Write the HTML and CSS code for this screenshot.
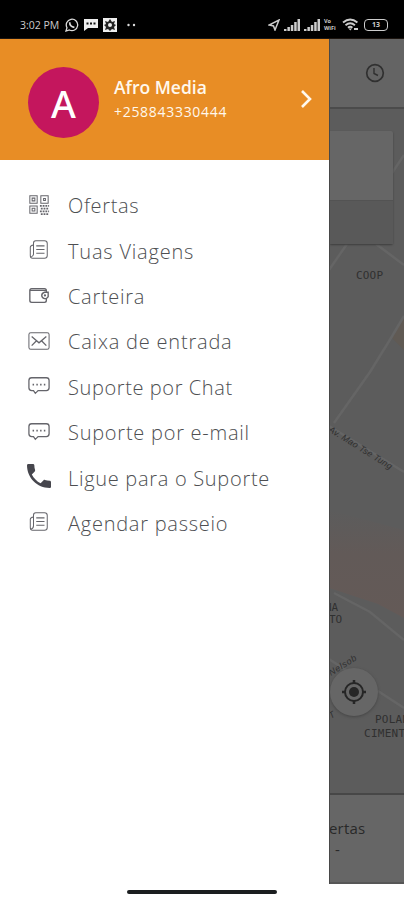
FILE: index.html
```html
<!DOCTYPE html>
<html lang="pt">
<head>
<meta charset="utf-8">
<title>Menu</title>
<link rel="stylesheet" href="styles.css">
</head>
<body>
<svg class="defs" width="0" height="0" aria-hidden="true">
  <symbol id="doc" viewBox="0 0 24 24"><path d="M6 6V4.500Q6 2 8.500 2H18q3 0 3 3v13q0 3-3 3H5q-2.500 0-2.500-3V9q0-2 3.500-2.500V16q0 3-2.500 3.500M9 7.500h9M9 11.500h9M9 15.500h9"/></symbol>
  <symbol id="chat" viewBox="0 0 24 24"><path stroke-width="1.400" d="M4 3h16q3 0 3 3v8q0 3-3 3h-9l-3 3-2-3H4q-3 0-3-3V6q0-3 3-3Z"/><path stroke-width="1.700" stroke-dasharray="1.600 2.500" d="M5 10.500h15"/></symbol>
</svg>
<div class="phone">
  <header class="status">
    <div class="status-left">
      <span class="time">3:02 PM</span>
      <svg width="14" height="14" viewBox="0 0 14 14" fill="none" stroke="#ddd"><path stroke-width="1.300" d="M1 13l1-3.300a5.700 5.700 0 1 1 2.400 2.300Z"/><path stroke-width="1.700" d="M4.700 4.300q0 4.500 4.700 5"/></svg>
      <svg width="14" height="13" viewBox="0 0 14 13"><path fill="#eee" d="M0 1h14v9H4l-4 3Z"/><path stroke="#111" stroke-width="2" stroke-dasharray="2 1.500" d="M2.500 5.500h10"/></svg>
      <svg width="14" height="14" viewBox="0 0 14 14"><path fill="#eee" d="M0 0h14v14H0Z"/><path fill="#222" d="M7 1l2 3 3-1-1 3 2 1-2 2 1 3-3-1-2 2-2-2-3 1 1-3-2-2 2-1-1-3 3 1Z"/><circle cx="7" cy="7" r="2" fill="#eee"/></svg>
      <svg class="more" width="9" height="4" viewBox="0 0 9 4" fill="#ddd"><circle cx="1.500" cy="2" r="1.200"/><circle cx="7" cy="2" r="1.200"/></svg>
    </div>
    <div class="status-right">
      <svg width="12" height="12" viewBox="0 0 12 12" fill="none" stroke="#ccc" stroke-width="1.500"><path d="M11 1L7 11 5.500 7 1 6Z"/></svg>
      <svg width="16" height="12" viewBox="0 0 16 12" fill="#ccc"><path d="M0 10h2.500v2H0ZM3.400 8h2.500v4h-2.500ZM6.800 6h2.500v6h-2.500ZM10.200 3h2.500v9h-2.500ZM13.500 0h2.500v12h-2.500Z"/></svg>
      <svg width="16" height="12" viewBox="0 0 16 12" fill="#ccc"><path d="M0 10h2.500v2H0ZM3.400 8h2.500v4h-2.500ZM6.800 6h2.500v6h-2.500ZM10.200 3h2.500v9h-2.500ZM13.500 0h2.500v12h-2.500Z"/></svg>
      <span class="vo"><span>Vo</span><span>WiFi</span></span>
      <svg width="17" height="13" viewBox="0 0 17 13" fill="none" stroke="#ccc" stroke-width="1.900"><path d="M1 4.500q7.200-6 14.400 0M3.500 7.300q4.700-4 9.400 0M6 9.700q2.200-2 4.400 0"/><path fill="#ccc" stroke="none" d="M6.500 10.500h3.500l-1.700 2ZM12 10h4v2h-4Z"/></svg>
      <span class="battery">13</span>
    </div>
  </header>
  <div class="content">
    <aside class="drawer">
      <div class="profile">
        <div class="avatar">A</div>
        <div class="who"><div class="name">Afro Media</div><div class="number">+258843330444</div></div>
        <svg class="chevron" width="12" height="20" viewBox="0 0 12 20"><path d="M2 2l8 8-8 8" fill="none" stroke="#fff8ed" stroke-width="2.600"/></svg>
      </div>
      <nav class="menu">
        <a class="item"><svg class="icon" viewBox="0 0 24 24"><path d="M2 2h8v8H2ZM14 2h8v8h-8ZM2 13h8v8H2ZM4.500 4.500h3v3h-3ZM17 5h2v2h-2ZM4.500 15.500h3v3h-3Z"/><path stroke-width="2" stroke-dasharray="2 1" d="M13 13h10M14 16h9M13 19h10M14 22h9"/></svg><span class="w1">Ofertas</span></a>
        <a class="item"><svg class="icon"><use href="#doc"/></svg><span class="w2">Tuas Viagens</span></a>
        <a class="item"><svg class="icon" viewBox="0 0 24 24"><path stroke-width="1.500" d="M20 9V7q0-2-2-2H4Q2 5 2 7v11q0 2 2 2h14q2 0 2-2v-2M2 7h18M22 9h-4q-3 1-3 3.500t3 3.500h2l2-2Z"/><circle cx="18.500" cy="12.500" r=".7"/></svg><span class="w3">Carteira</span></a>
        <a class="item"><svg class="icon" viewBox="0 0 24 24"><rect x="1" y="3" width="22" height="18" rx="2"/><path stroke-width="1.400" d="M4 7l8 7 8-7M4 17l5-5M20 17l-5-5"/></svg><span class="w4">Caixa de entrada</span></a>
        <a class="item"><svg class="icon"><use href="#chat"/></svg><span class="w5">Suporte por Chat</span></a>
        <a class="item"><svg class="icon"><use href="#chat"/></svg><span class="w6">Suporte por e-mail</span></a>
        <a class="item"><svg class="icon call" viewBox="3 3 18 18"><path d="M6.620 10.790c1.440 2.830 3.760 5.140 6.590 6.590l2.200-2.200c.27-.27.67-.36 1.020-.24 1.120.37 2.330.57 3.570.57.55 0 1 .45 1 1V20c0 .55-.45 1-1 1C10.610 21 3 13.390 3 4c0-.55.45-1 1-1h3.500c.55 0 1 .45 1 1 0 1.250.2 2.450.57 3.570.11.35.03.74-.25 1.020Z"/></svg><span class="w7">Ligue para o Suporte</span></a>
        <a class="item"><svg class="icon"><use href="#doc"/></svg><span class="w8">Agendar passeio</span></a>
      </nav>
    </aside>
    <main class="behind">
      <div class="topbar"><svg width="20" height="20" viewBox="0 0 20 20" fill="none" stroke="#303030" stroke-width="1.700"><circle cx="10" cy="10" r="8.300"/><path stroke-width="1.400" d="M9 5v5.500l4 2"/></svg></div>
      <div class="map">
        <svg width="75" height="684" viewBox="329 109 75 684">
          <defs><linearGradient id="warm" x1="0" y1="0" x2="0" y2="1"><stop offset="0" stop-color="#5c5c5c"/><stop offset=".4" stop-color="#625a58"/><stop offset="1" stop-color="#645a57"/></linearGradient></defs>
          <path fill="#5c5c5c" d="M329 109h75v684h-75Z"/>
          <path fill="url(#warm)" d="M329 510L404 530V618L378 604 329 588Z"/>
          <path fill="#62594f" fill-opacity=".6" d="M404 316L392 338 404 350Z"/>
          <g fill="none" stroke="#656565" stroke-width="2.500"><path d="M329 270L347 244M376 244L404 265M392 173L404 155M404 316L391 338 370 372 334 423M329 426L404 472M334 593L370 612 404 640M329 659L404 708"/></g>
          <g class="labels">
            <text x="356" y="279" textLength="27">COOP</text>
            <text x="325" y="611" textLength="13">NA</text><text x="329" y="623" textLength="13">TO</text>
            <text x="375" y="723" textLength="34">POLAN</text><text x="364" y="737" textLength="48">CIMENTO</text>
            <text class="street" transform="translate(328 431) rotate(32)" textLength="73">Av. Mao Tse Tung</text>
            <text class="street" transform="translate(331 676) rotate(-32)" textLength="31">Nelsob</text>
            <text class="street" transform="translate(331 719) rotate(-32)">T</text>
          </g>
        </svg>
        <div class="promo"><div></div></div>
        <div class="locate"><svg width="26" height="26" viewBox="0 0 26 26" fill="none" stroke="#262626"><circle cx="13" cy="13" r="9" stroke-width="2"/><circle cx="13" cy="13" r="5" fill="#262626" stroke="none"/><path stroke-width="2.500" d="M13 1v4M13 21v4M1 13h4M21 13h4"/></svg></div>
      </div>
      <div class="bottom"><span class="tab">ertas</span><span class="dash">-</span></div>
    </main>
  </div>
  <footer class="gesture"><div class="pill"></div></footer>
</div>
</body>
</html>
```
FILE: styles.css
```css
* { box-sizing: border-box; }
body { margin: 0; background: #fff; font-family: "Open Sans", "Noto Sans", sans-serif; }
.defs { display: block; }
.phone { width: 404px; height: 900px; display: flex; flex-direction: column; overflow: hidden; }
.status { height: 39px; background: #000; border-bottom: 1px solid #1c1510; display: flex; justify-content: space-between; align-items: flex-start; padding: 17px 16px 0 20px; color: #ccc; }
.status-left, .status-right { display: flex; align-items: center; height: 15px; }
.status-left { gap: 5px; }
.time { font-size: 10.5px; line-height: 14px; width: 40px; white-space: nowrap; }
.more { margin-left: 5px; }
.status-right { gap: 4px; }
.vo { font-size: 5.5px; line-height: 7px; font-weight: 700; width: 14px; display: flex; flex-direction: column; }
.battery { width: 24px; height: 12px; border: 1.5px solid #ccc; border-radius: 4px; font-size: 7px; line-height: 9px; font-weight: 700; text-align: center; margin-left: 1px; }
.content { height: 845px; display: flex; }
.drawer { width: 329px; background: #fff; }
.profile { height: 121px; background: #e88d25; display: flex; padding: 28px 17px 0 28px; }
.avatar { width: 71px; height: 71px; border-radius: 50%; background: #c4165d; color: #fff; font-family: "Noto Sans", sans-serif; font-size: 38px; font-weight: 500; line-height: 73px; text-align: center; }
.who { margin: 7px 0 0 15px; flex: 1; color: #fff8ed; white-space: nowrap; }
.name { font-size: 17.5px; line-height: 26px; font-weight: 600; letter-spacing: 0; }
.number { font-size: 14px; line-height: 24px; letter-spacing: .7px; }
.chevron { margin-top: 22px; }
.menu { padding-top: 23px; }
.item { height: 45.4px; display: flex; align-items: center; padding-left: 28px; color: #4e4f52; font-size: 20px; font-weight: 320; white-space: nowrap; }
.w1 { letter-spacing: .65px; }
.w2 { letter-spacing: .8px; }
.w3 { letter-spacing: .7px; }
.w4 { letter-spacing: .8px; }
.w5 { letter-spacing: .6px; }
.w6 { letter-spacing: .75px; }
.w7 { letter-spacing: .7px; }
.w8 { letter-spacing: .75px; }
.icon { width: 22px; height: 22px; margin-right: 18px; fill: none; stroke: #65656b; stroke-width: 1.1; position: relative; top: -1px; }
.call { width: 24px; height: 24px; margin: 0 17px 0 -1px; fill: #46464d; stroke: none; top: -2px; }
.behind { width: 75px; display: flex; flex-direction: column; border-left: 1px solid #484848; background: #656565; overflow: hidden; }
.topbar { height: 70px; padding: 24px 0 0 35px; border-bottom: 2px solid #4b4b4b; background: #646464; flex: none; }
.topbar svg { display: block; }
.map { height: 684px; position: relative; flex: none; }
.map > svg { display: block; margin-left: -1px; }
.promo { position: absolute; left: 0; top: 22px; width: 63px; height: 113px; background: #666; border-radius: 0 2px 2px 0; box-shadow: 0 1px 2px #3e3e3e; padding-top: 69px; }
.promo div { height: 44px; background: #595959; border-top: 1px solid #535353; }
.locate { position: absolute; left: 0; top: 559px; width: 48px; height: 48px; border-radius: 50%; background: #666; box-shadow: 0 1px 3px #454545; display: flex; align-items: center; justify-content: center; }
.labels { font-family: "DejaVu Sans Mono", monospace; font-size: 11px; fill: #303030; }
.street { font-size: 9px; font-family: "Liberation Sans", sans-serif; font-style: italic; }
.bottom { height: 91px; flex: none; display: flex; flex-direction: column; border-top: 2px solid #474747; border-bottom: 2px solid #565656; background: #666; color: #292929; padding-top: 22px; }
.tab { font-size: 15px; line-height: 22px; letter-spacing: .2px; margin-left: -1px; }
.dash { font-size: 15px; line-height: 20px; padding-left: 5px; }
.gesture { height: 16px; padding: 6px 0 0 127px; }
.pill { width: 150px; height: 4px; border-radius: 2px; background: #1b1e20; }
```
